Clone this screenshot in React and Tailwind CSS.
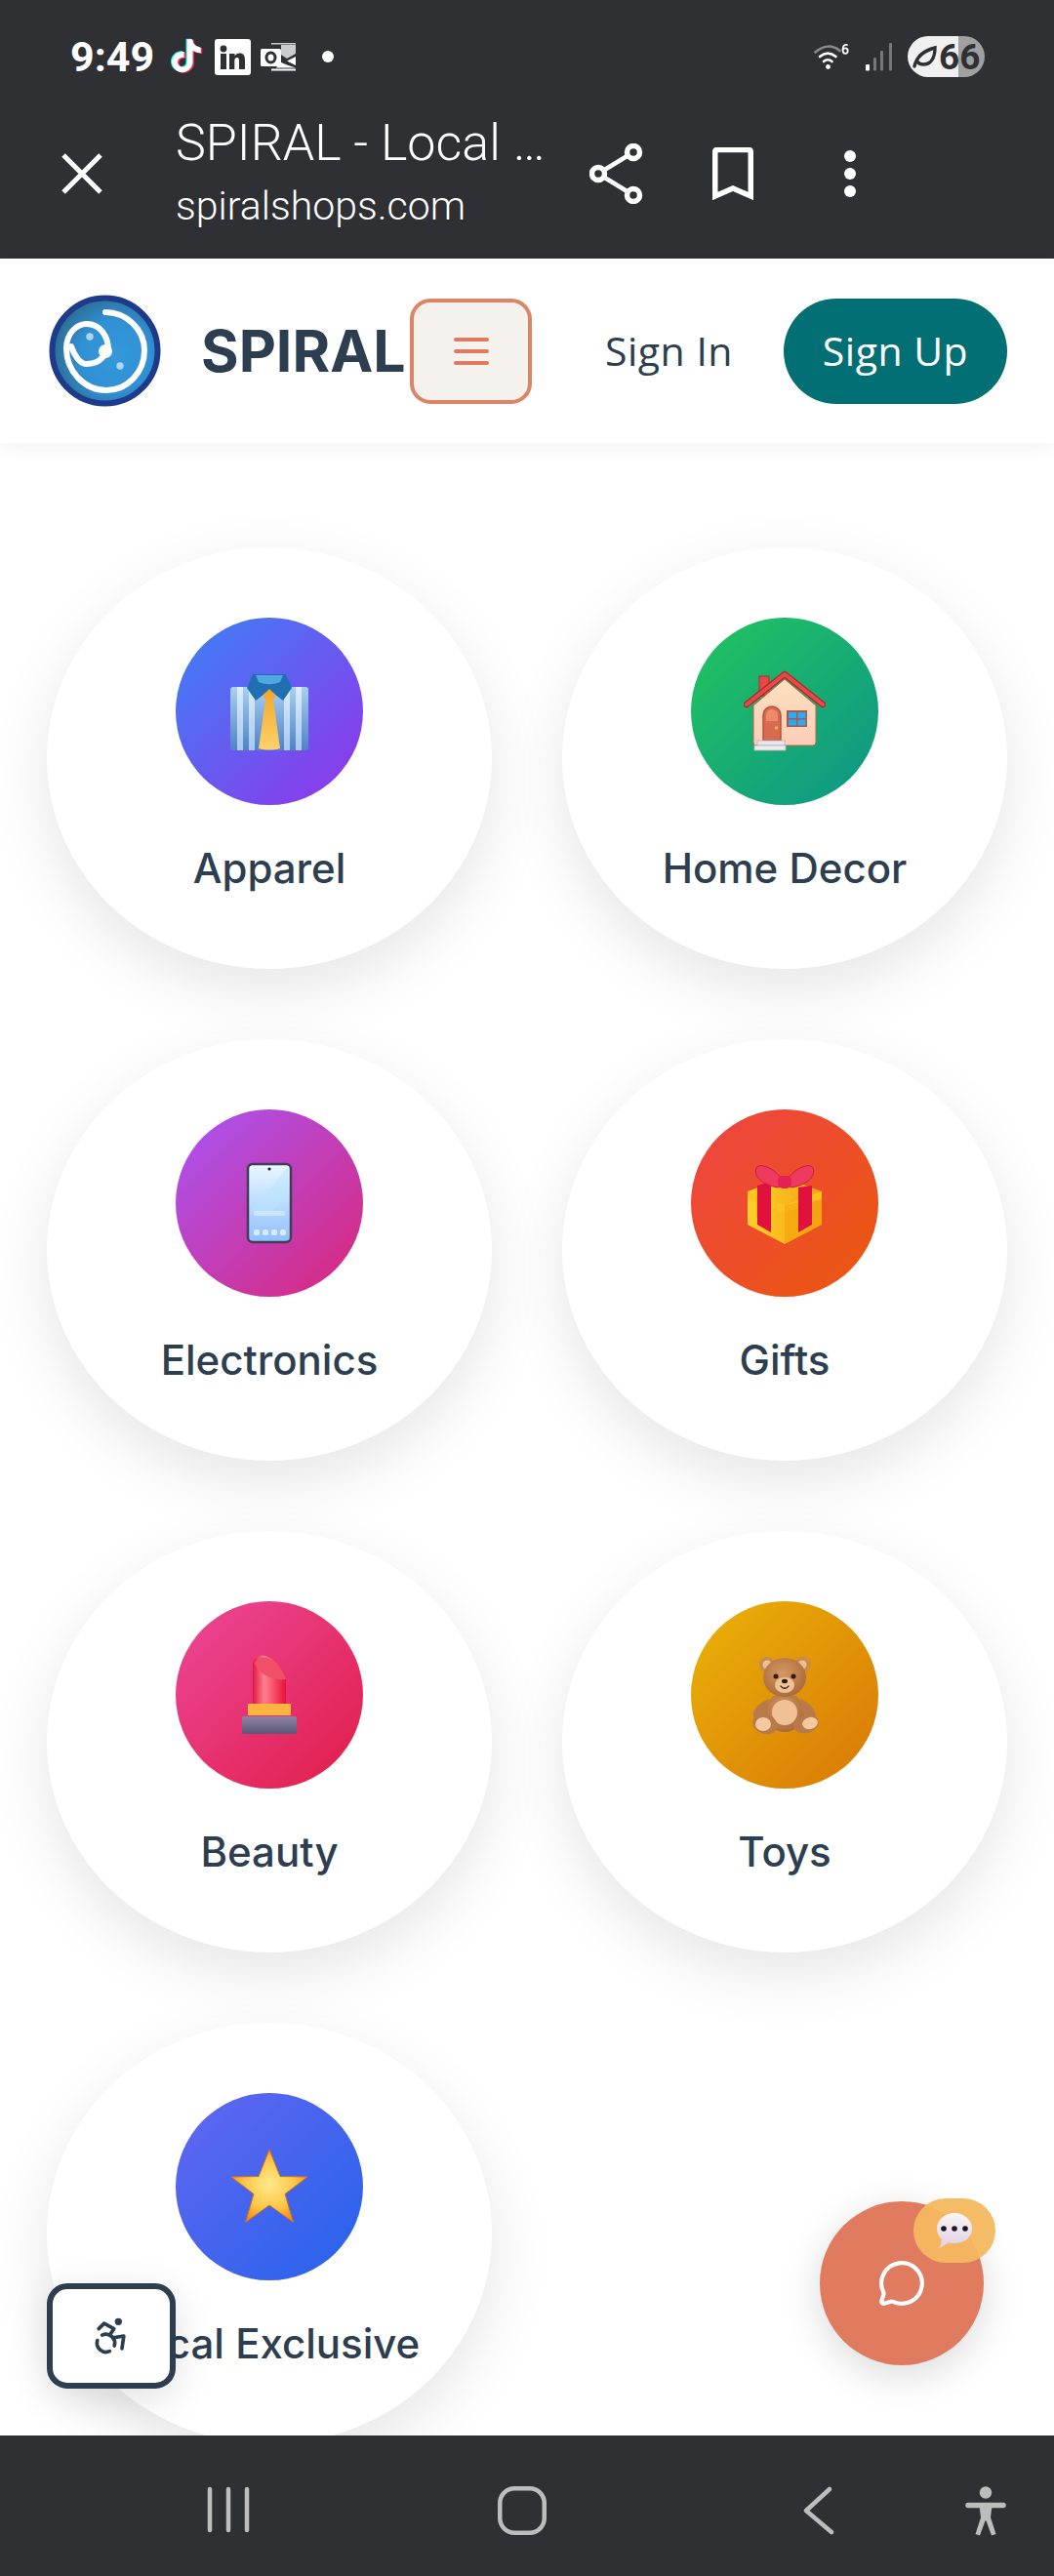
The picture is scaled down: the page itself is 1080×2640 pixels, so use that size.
import { Accessibility, MessageCircle } from 'lucide-react'

const TIKTOK =
  'M12.525.02c1.31-.02 2.61-.01 3.91-.02.08 1.53.63 3.09 1.75 4.17 1.12 1.11 2.7 1.62 4.24 1.79v4.03c-1.44-.05-2.89-.35-4.2-.97-.57-.26-1.1-.59-1.62-.93-.01 2.92.01 5.84-.02 8.75-.08 1.4-.54 2.79-1.35 3.94-1.31 1.92-3.58 3.17-5.91 3.21-1.43.08-2.86-.31-4.08-1.03-2.02-1.19-3.44-3.37-3.65-5.71-.02-.5-.03-1-.01-1.49.18-1.9 1.12-3.72 2.58-4.96 1.66-1.44 3.98-2.13 6.15-1.72.02 1.48-.04 2.96-.04 4.44-.99-.32-2.15-.23-3.02.37-.63.41-1.11 1.04-1.36 1.75-.21.51-.15 1.07-.14 1.61.24 1.64 1.82 3.02 3.5 2.87 1.12-.01 2.19-.66 2.77-1.61.19-.33.4-.67.41-1.06.1-1.79.06-3.57.07-5.36.01-4.03-.01-8.05.02-12.07z'

function StatusBar() {
  return (
    <div className="flex h-[116px] items-center pl-[72px] font-['Roboto',sans-serif]">
      <span className="w-[102px] text-[43px] leading-none font-bold text-white">9:49</span>
      {/* tiktok */}
      <svg width="35" height="38" viewBox="0 0 24 26" className="mt-[0px]">
        <path d={TIKTOK} fill="#25f4ee" transform="translate(-.8 .4) scale(.97)" />
        <path d={TIKTOK} fill="#fe2c55" transform="translate(1 1.3) scale(.97)" />
        <path d={TIKTOK} fill="#ffffff" transform="translate(0 .8) scale(.97)" />
      </svg>
      {/* linkedin */}
      <svg width="37" height="37" viewBox="0 0 37 37" className="ml-[11px]">
        <rect width="37" height="37" rx="3" fill="#fff" />
        <circle cx="9" cy="10" r="3.4" fill="#2f3034" />
        <rect x="6" y="15" width="6" height="16" fill="#2f3034" />
        <path d="M15 15h5.6v2.4c1-1.7 2.8-2.8 5-2.8 4 0 5.4 2.6 5.4 6.6V31h-6v-8.800c0-2-.6-3.200-2.200-3.200-1.700 0-2.500 1.300-2.500 3.200V31H15z" fill="#2f3034" />
      </svg>
      {/* outlook */}
      <svg width="37" height="30" viewBox="0 0 37 30" className="ml-[10px]">
        <path d="M11 1h25v1.500H11zM21 3h15v9L27 17l-6-4z" fill="#fff" opacity=".75" />
        <path d="M36 15v9l-9-4.500zM11 27.500h25V29.500H11zM20 20.500l7 3 9 3H16z" fill="#fff" />
        <rect x="0" y="7" width="21" height="18" rx="1.500" fill="#fff" />
        <ellipse cx="10.500" cy="16" rx="4.500" ry="5" fill="none" stroke="#2f3034" strokeWidth="3" />
      </svg>
      <span className="ml-[26px] size-[12px] rounded-full bg-white" />
      <div className="ml-auto flex items-center pr-[71px]">
        {/* wifi */}
        <svg width="36" height="28" viewBox="0 0 36 28" fill="none" strokeLinecap="round">
          <path d="M1.500 9.500C10 2 19 2 26.500 8" stroke="#8a8a8c" strokeWidth="2.600" />
          <path d="M6 14c5.500-4.500 11-4.500 16.500 0" stroke="#fff" strokeWidth="2.600" />
          <path d="M10 19c3-2.500 5.500-2.500 8.500 0" stroke="#fff" strokeWidth="2.600" />
          <circle cx="14.500" cy="24.500" r="2.400" fill="#fff" />
          <path d="M34 2c-2.500-.8-4.500 1-4.500 5 0 2.500 1 3.800 2.600 3.800 1.500 0 2.600-1.200 2.600-2.800 0-1.500-1-2.600-2.400-2.600-1.200 0-2.300.8-2.600 2" stroke="#fff" strokeWidth="1.800" />
        </svg>
        {/* signal */}
        <svg width="28" height="30" viewBox="0 0 28 30" className="ml-[17px]">
          <rect x="0" y="23" width="4" height="6.500" rx="1" fill="#fff" />
          <rect x="8" y="16" width="3" height="13.500" rx="1" fill="#77787b" />
          <rect x="15" y="9" width="3" height="20.500" rx="1" fill="#77787b" />
          <rect x="24" y="1" width="3" height="28.500" rx="1" fill="#77787b" />
        </svg>
        {/* battery */}
        <div className="relative ml-[15px] flex h-[42px] w-[79px] items-center overflow-hidden rounded-full bg-[linear-gradient(90deg,#f0f0f0_66%,#a0a0a0_66%)]">
          <svg width="26" height="28" viewBox="0 0 26 28" className="ml-[4px] shrink-0">
            <path d="M3 24C5 15 12 8 24 5c0 10-4 17-12 17-3 0-5-1-6-3" fill="none" stroke="#2f3034" strokeWidth="3.400" strokeLinecap="round" />
          </svg>
          <span className="ml-[2px] text-[37px] leading-none font-bold text-[#2f3034] font-['Roboto',sans-serif]">66</span>
        </div>
      </div>
    </div>
  )
}

function BrowserBar() {
  return (
    <div className="flex h-[149px] items-start font-['Roboto',sans-serif]">
      <svg width="42" height="42" viewBox="0 0 42 42" className="mt-[41px] ml-[63px] shrink-0" stroke="#fff" strokeWidth="5">
        <path d="M2 2l38 38M40 2L2 40" />
      </svg>
      <div className="ml-[75px] w-[420px] shrink-0 text-white">
        <div className="h-[62px] text-[52px] leading-[62px] font-light whitespace-nowrap">SPIRAL - Local …</div>
        <div className="mt-[8px] text-[41px] leading-[50px] font-light whitespace-nowrap">spiralshops.com</div>
      </div>
      <svg width="56" height="62" viewBox="0 0 56 62" className="mt-[31px] ml-[4px] shrink-0" fill="none" stroke="#fff">
        <path d="M9 31L45 9M9 31l36 22" strokeWidth="4.500" />
        <circle cx="9" cy="31" r="6.500" strokeWidth="5.500" fill="#2f3034" />
        <circle cx="45" cy="9" r="6.500" strokeWidth="5.500" fill="#2f3034" />
        <circle cx="45" cy="53" r="6.500" strokeWidth="5.500" fill="#2f3034" />
      </svg>
      <svg width="42" height="54" viewBox="0 0 42 54" className="mt-[35px] ml-[70px] shrink-0" fill="none" stroke="#fff" strokeWidth="5.500">
        <path d="M2.750 50V4a1.500 1.500 0 0 1 1.500-1.500h33.500a1.500 1.500 0 0 1 1.500 1.500v46L21 42z" />
      </svg>
      <div className="mt-[38px] ml-[93px] flex shrink-0 flex-col gap-[6px]">
        <span className="size-[12px] rounded-full bg-white" />
        <span className="size-[12px] rounded-full bg-white" />
        <span className="size-[12px] rounded-full bg-white" />
      </div>
    </div>
  )
}

function Logo() {
  return (
    <svg width="115" height="115" viewBox="0 0 115 115" className="shrink-0">
      <defs>
        <radialGradient id="logoFill" cx="60%" cy="55%" r="62%">
          <stop offset="0%" stopColor="#3498db" />
          <stop offset="55%" stopColor="#3090d4" />
          <stop offset="100%" stopColor="#2c6a8e" />
        </radialGradient>
      </defs>
      <circle cx="57.500" cy="57.500" r="54" fill="url(#logoFill)" stroke="#1e3a8a" strokeWidth="6" />
      <path
        d="M58 18C80 18 98 36 98 57C98 80 80 98 59 98C36 98 18 78 18 55C18 40 28 30 39 30C52 30 61 42 61 57C52 70 46 71 38 71C32 71 26 62 23 53"
        fill="none"
        stroke="#fff"
        strokeWidth="6"
        strokeLinecap="round"
      />
      <circle cx="58" cy="58" r="7" fill="#fff" />
      <circle cx="42" cy="43" r="3.700" fill="#aed6f1" />
      <circle cx="73" cy="73" r="3.700" fill="#aed6f1" />
    </svg>
  )
}

function SiteHeader() {
  return (
    <header className="relative z-10 flex h-[189px] shrink-0 items-center bg-white pl-[50px] shadow-[0_5px_16px_rgba(0,0,0,0.05)]">
      <Logo />
      <span className="ml-[41px] w-[214px] shrink-0 font-['Inter',sans-serif] text-[59px] leading-none font-bold text-[#2c3e50]">SPIRAL</span>
      <button className="flex h-[108px] w-[125px] shrink-0 items-center justify-center rounded-[21px] border-[4px] border-[#dc8468] bg-[#f5f1ed]">
        <svg width="48" height="48" viewBox="0 0 24 24" fill="none" stroke="#e07b5f" strokeWidth="2" strokeLinecap="round">
          <path d="M4 6h16M4 12h16M4 18h16" />
        </svg>
      </button>
      <span className="ml-[75px] w-[183px] shrink-0 font-['Open_Sans',sans-serif] text-[41px] leading-none tracking-[0.5px] text-[#2c3e50]">Sign In</span>
      <button className="flex h-[108px] w-[229px] shrink-0 items-center justify-center rounded-full bg-[#026f75] font-['Open_Sans',sans-serif] text-[41px] leading-none tracking-[0.5px] text-white">
        Sign Up
      </button>
    </header>
  )
}

function ShirtEmoji() {
  return (
    <svg width="84" height="84" viewBox="0 0 84 84">
      <defs>
        <linearGradient id="shirtBody" x1="0" y1="0" x2="0" y2="1">
          <stop offset="0%" stopColor="#a9d0f0" />
          <stop offset="100%" stopColor="#4f82c8" />
        </linearGradient>
        <linearGradient id="shirtStripe" x1="0" y1="0" x2="0" y2="1">
          <stop offset="0%" stopColor="#dcedfb" />
          <stop offset="100%" stopColor="#a8c8ec" />
        </linearGradient>
        <linearGradient id="tie" x1="0" y1="0" x2="0" y2="1">
          <stop offset="0%" stopColor="#f0a52c" />
          <stop offset="100%" stopColor="#ffd26a" />
        </linearGradient>
      </defs>
      <rect x="2" y="17" width="80" height="65" rx="3" fill="url(#shirtBody)" />
      <rect x="9" y="17" width="6" height="65" fill="url(#shirtStripe)" />
      <rect x="21" y="17" width="6" height="65" fill="url(#shirtStripe)" />
      <rect x="57" y="17" width="6" height="65" fill="url(#shirtStripe)" />
      <rect x="69" y="17" width="6" height="65" fill="url(#shirtStripe)" />
      <path d="M25 4h34l6 14-9 13-14-11-14 11-9-13z" fill="#1f6fb2" />
      <path d="M28 5h28l-3 7c-7 3-15 3-22 0z" fill="#4fa8e0" />
      <path d="M42 19l7 7-3 4 7 50c-7 2-15 2-22 0l7-50-3-4z" fill="url(#tie)" />
    </svg>
  )
}

function HouseEmoji() {
  return (
    <svg width="84" height="84" viewBox="0 0 84 84">
      <defs>
        <linearGradient id="wall" x1="0" y1="0" x2="0" y2="1">
          <stop offset="0%" stopColor="#fbe0bd" />
          <stop offset="100%" stopColor="#ffcdb8" />
        </linearGradient>
      </defs>
      <rect x="16" y="6" width="10" height="20" fill="#e8484a" stroke="#a92a2a" />
      <path d="M10 36L42 9l32 27v38a3 3 0 0 1-3 3H13a3 3 0 0 1-3-3z" fill="url(#wall)" stroke="#b5654a" strokeWidth="1" />
      <path d="M3 35L42 4l39 31" fill="none" stroke="#a92a2a" strokeWidth="6.500" strokeLinecap="round" strokeLinejoin="round" />
      <path d="M3 35L42 4l39 31" fill="none" stroke="#e94848" strokeWidth="4" strokeLinecap="round" strokeLinejoin="round" />
      <path d="M20 72V46a9 9 0 0 1 18 0v26z" fill="#d9694f" stroke="#b5543f" strokeWidth="1.500" />
      <path d="M23 52v-6a6 6 0 0 1 12 0v6z" fill="#ee8a68" />
      <circle cx="33.500" cy="59" r="1.800" fill="#f4b02c" />
      <rect x="44" y="41" width="21" height="17" fill="#a65a48" />
      <rect x="46" y="43" width="8" height="6" fill="#2ea8f0" />
      <rect x="55.500" y="43" width="8" height="6" fill="#2ea8f0" />
      <rect x="46" y="50.500" width="8" height="6" fill="#2ea8f0" />
      <rect x="55.500" y="50.500" width="8" height="6" fill="#2ea8f0" />
      <rect x="14" y="72" width="28" height="5" fill="#e8e4ea" stroke="#b9aeb9" strokeWidth=".8" />
      <rect x="11" y="77" width="32" height="5" fill="#efeaf0" stroke="#b9aeb9" strokeWidth=".8" />
    </svg>
  )
}

function PhoneEmoji() {
  return (
    <svg width="84" height="84" viewBox="0 0 84 84">
      <defs>
        <linearGradient id="screen" x1="0" y1="0" x2="0" y2="1">
          <stop offset="0%" stopColor="#eaf8ff" />
          <stop offset="100%" stopColor="#8fbfff" />
        </linearGradient>
      </defs>
      <rect x="20" y="2" width="44" height="80" rx="5" fill="url(#screen)" stroke="#413f58" strokeWidth="2.500" />
      <path d="M23 50L61 5v31L44 50z" fill="#b9e4ff" opacity=".55" />
      <circle cx="42" cy="7" r="1.600" fill="#1e1e2e" />
      <rect x="26" y="50" width="32" height="5" rx="1.500" fill="#d5e8ff" opacity=".8" />
      {[26, 35, 44, 53].map((x) => (
        <rect key={x} x={x} y="69" width="6" height="6" rx="2" fill="#dcebff" />
      ))}
    </svg>
  )
}

function GiftEmoji() {
  return (
    <svg width="84" height="84" viewBox="0 0 84 84">
      <defs>
        <linearGradient id="giftBox" x1="0" y1="0" x2="1" y2="0">
          <stop offset="0%" stopColor="#ffd02b" />
          <stop offset="100%" stopColor="#f3a30f" />
        </linearGradient>
      </defs>
      <path d="M4 30l38-14 38 14v34L42 84 4 64z" fill="url(#giftBox)" />
      <path d="M4 30l38 14 38-14v8L42 52 4 38z" fill="#ffc21f" />
      <path d="M42 44v40l38-20V38z" fill="#f3a30f" opacity=".55" />
      <path d="M14 24l14-4v52l-14-8zM56 26l14-2v40l-14 8z" fill="#e0103f" />
      <path d="M42 22C34 6 16 0 13 6c-3 7 4 17 22 20zM42 22C50 6 68 0 71 6c3 7-4 17-22 20z" fill="#ef3a60" stroke="#c51a43" strokeWidth="1" />
      <rect x="35" y="14" width="14" height="13" rx="5" fill="#e32152" />
    </svg>
  )
}

function LipstickEmoji() {
  return (
    <svg width="84" height="84" viewBox="0 0 84 84">
      <defs>
        <linearGradient id="lipBody" x1="0" y1="0" x2="1" y2="0">
          <stop offset="0%" stopColor="#e01840" />
          <stop offset="35%" stopColor="#ff8090" />
          <stop offset="100%" stopColor="#ea0f38" />
        </linearGradient>
        <linearGradient id="lipBase" x1="0" y1="0" x2="0" y2="1">
          <stop offset="0%" stopColor="#8b83a2" />
          <stop offset="100%" stopColor="#5c5678" />
        </linearGradient>
      </defs>
      <path d="M25 51V12C25 4 32 0 38 2c10 3 21 14 21 26v23z" fill="url(#lipBody)" />
      <path d="M27 10c3-7 10-7 15-5 8 3 15 12 17 21-12 2-27-4-32-16z" fill="#ef5067" />
      <rect x="20" y="51" width="44" height="12" fill="#fdb33f" />
      <rect x="14" y="64" width="56" height="18" rx="1.500" fill="url(#lipBase)" />
    </svg>
  )
}

function BearEmoji() {
  return (
    <svg width="84" height="84" viewBox="0 0 84 84">
      <defs>
        <radialGradient id="fur" cx="45%" cy="40%" r="65%">
          <stop offset="0%" stopColor="#d79a63" />
          <stop offset="100%" stopColor="#a8683a" />
        </radialGradient>
      </defs>
      <circle cx="24" cy="11" r="8" fill="#c58a55" />
      <circle cx="60" cy="11" r="8" fill="#c58a55" />
      <circle cx="24" cy="11" r="4.500" fill="#efbf90" />
      <circle cx="60" cy="11" r="4.500" fill="#efbf90" />
      <ellipse cx="42" cy="60" rx="20" ry="20" fill="url(#fur)" />
      <path d="M26 46C16 50 8 58 10 64c2 4 8 2 14-4z" fill="#b77a48" />
      <path d="M58 46c10 4 16 12 16 18-2 4-8 2-14-4z" fill="#b77a48" />
      <ellipse cx="42" cy="60" rx="13" ry="13" fill="#f0c195" />
      <ellipse cx="42" cy="24" rx="22" ry="20" fill="url(#fur)" />
      <ellipse cx="42" cy="32" rx="10" ry="8" fill="#f0c195" />
      <circle cx="33" cy="23" r="2.500" fill="#2e1c12" />
      <circle cx="51" cy="23" r="2.500" fill="#2e1c12" />
      <ellipse cx="42" cy="28" rx="3" ry="2.200" fill="#2e1c12" />
      <path d="M38 33c2 3 6 3 8 0" fill="none" stroke="#2e1c12" strokeWidth="1.300" strokeLinecap="round" />
      <ellipse cx="22" cy="72" rx="13" ry="10" fill="#b77a48" transform="rotate(20 22 72)" />
      <ellipse cx="64" cy="72" rx="13" ry="9" fill="#b77a48" transform="rotate(-15 64 72)" />
      <ellipse cx="20" cy="72" rx="8" ry="7" fill="#f3c9a0" />
      <ellipse cx="68" cy="71" rx="8" ry="6" fill="#f3c9a0" transform="rotate(-15 68 71)" />
    </svg>
  )
}

function StarEmoji() {
  return (
    <svg width="84" height="84" viewBox="0 0 84 84">
      <defs>
        <radialGradient id="starFill" cx="50%" cy="48%" r="55%">
          <stop offset="0%" stopColor="#ffe98a" />
          <stop offset="60%" stopColor="#fdc84a" />
          <stop offset="100%" stopColor="#ee8a1e" />
        </radialGradient>
      </defs>
      <path d="M42 4l11 27.500 28 .5-23 17.500 8.500 29L42 61 17.500 78.500 26 49.500 3 32l28-.5z" fill="url(#starFill)" stroke="#d96f14" strokeWidth="1" strokeLinejoin="round" />
    </svg>
  )
}

function CategoryCard({ label, gradient, Emoji }) {
  return (
    <div className="flex h-[432px] flex-col items-center rounded-[50%] bg-white pt-[72px] shadow-[0_21px_63px_rgba(0,0,0,0.1)]">
      <div className={`flex size-[192px] items-center justify-center rounded-full ${gradient}`}>
        <Emoji />
      </div>
      <span className="mt-[33px] font-['Inter',sans-serif] text-[42px] leading-[63px] font-medium text-[#2c3e50]">{label}</span>
    </div>
  )
}

const categories = [
  { label: 'Apparel', gradient: 'bg-[linear-gradient(135deg,#3b82f6,#9333ea)]', Emoji: ShirtEmoji },
  { label: 'Home Decor', gradient: 'bg-[linear-gradient(135deg,#22c55e,#0d9488)]', Emoji: HouseEmoji },
  { label: 'Electronics', gradient: 'bg-[linear-gradient(135deg,#a855f7,#db2777)]', Emoji: PhoneEmoji },
  { label: 'Gifts', gradient: 'bg-[linear-gradient(135deg,#ef4444,#ea580c)]', Emoji: GiftEmoji },
  { label: 'Beauty', gradient: 'bg-[linear-gradient(135deg,#ec4899,#e11d48)]', Emoji: LipstickEmoji },
  { label: 'Toys', gradient: 'bg-[linear-gradient(135deg,#eab308,#d97706)]', Emoji: BearEmoji },
  { label: 'Local Exclusive', gradient: 'bg-[linear-gradient(135deg,#6366f1,#2563eb)]', Emoji: StarEmoji },
]

function NavBar() {
  return (
    <nav className="flex h-[144px] shrink-0 items-start bg-[#2f3034] pt-[52px] pl-[212px]">
      <svg width="44" height="48" viewBox="0 0 44 48" stroke="#bdbdbd" strokeWidth="4.500" strokeLinecap="round">
        <path d="M3 3v42M22 3v42M41 3v42" />
      </svg>
      <svg width="50" height="50" viewBox="0 0 50 50" fill="none" stroke="#bdbdbd" strokeWidth="4.500" className="ml-[254px]">
        <rect x="2.250" y="2.250" width="45.500" height="45.500" rx="15" />
      </svg>
      <svg width="32" height="50" viewBox="0 0 32 50" fill="none" stroke="#bdbdbd" strokeWidth="4.500" strokeLinecap="round" strokeLinejoin="round" className="ml-[263px]">
        <path d="M27 3L3 25l26 22" />
      </svg>
      <svg width="42" height="52" viewBox="0 0 42 52" className="ml-[134px]">
        <circle cx="21" cy="6.500" r="6.200" fill="#bdbdbd" />
        <path d="M3 19.500h36" stroke="#bdbdbd" strokeWidth="5.500" strokeLinecap="round" />
        <path d="M14.500 20h13l-1.500 12 5.500 17-4.500 1.500-5.500-15h-1l-5.500 15-4.500-1.500L16 32z" fill="#bdbdbd" />
      </svg>
    </nav>
  )
}

export default function App() {
  return (
    <div className="relative flex h-[2640px] w-[1080px] flex-col overflow-hidden bg-white">
      <div className="h-[265px] shrink-0 bg-[#2f3034]">
        <StatusBar />
        <BrowserBar />
      </div>
      <SiteHeader />
      <main className="min-h-0 flex-1 overflow-hidden px-[48px] pt-[107px]">
        <div className="grid grid-cols-2 gap-[72px]">
          {categories.map((c) => (
            <CategoryCard key={c.label} {...c} />
          ))}
        </div>
      </main>
      <NavBar />

      {/* accessibility widget */}
      <button className="absolute top-[2340px] left-[48px] z-20 flex h-[108px] w-[132px] items-center justify-center rounded-[21px] border-[6px] border-[#2c3e50] bg-white shadow-[0_10px_40px_rgba(0,0,0,0.12)]">
        <Accessibility size={44} color="#2c3e50" strokeWidth={2} />
      </button>

      {/* chat button */}
      <button className="absolute top-[2256px] left-[840px] z-20 flex size-[168px] items-center justify-center rounded-full bg-[#e07b5f] shadow-[0_10px_40px_rgba(0,0,0,0.15)]">
        <MessageCircle size={50} color="#fff" strokeWidth={2} />
      </button>
      <div className="absolute top-[2253px] left-[936px] z-30 flex h-[66px] w-[84px] items-center justify-center rounded-full bg-[#f4b860]/95">
        <svg width="40" height="40" viewBox="0 0 40 40">
          <defs>
            <linearGradient id="bubble" x1="0" y1="0" x2="0" y2="1">
              <stop offset="0%" stopColor="#faf6f6" />
              <stop offset="100%" stopColor="#dfcfe6" />
            </linearGradient>
          </defs>
          <path d="M20 2c10 0 18 7 18 16s-8 15-18 15c-2 0-4 0-6-.800L5 38l2-9C4 26 2 22 2 18 2 9 10 2 20 2z" fill="url(#bubble)" />
          <circle cx="9" cy="18" r="2.800" fill="#1e1524" />
          <circle cx="20" cy="18" r="2.800" fill="#1e1524" />
          <circle cx="31" cy="18" r="2.800" fill="#1e1524" />
        </svg>
      </div>
    </div>
  )
}
